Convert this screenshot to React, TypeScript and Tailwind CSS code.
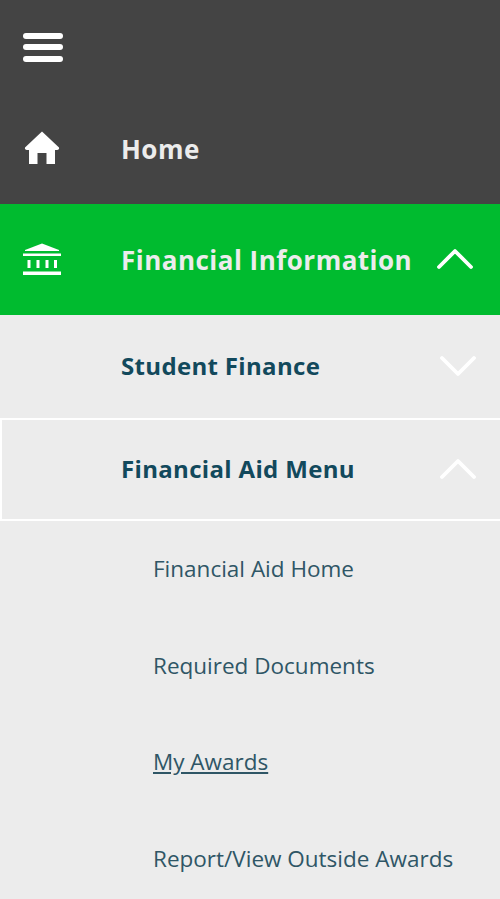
const font = "font-['Open_Sans','Noto_Sans',sans-serif]";

const HomeIcon = () => (
  <svg width="36" height="34" viewBox="0 0 36 34" fill="#fff">
    <path d="M18 0.5 L35 16.5 C35.5 18 34.5 19 33 19 L31 19 L31 33 L22.5 33 L22.5 22 L13.5 22 L13.5 33 L5 33 L5 19 L3 19 C1.5 19 0.5 18 1 16.5 Z" />
  </svg>
);

const BankIcon = () => (
  <svg width="40" height="34" viewBox="0 0 40 34" fill="#fff">
    <path d="M20 0.5 L37 7 L37 8 L3 8 L3 7 Z" />
    <rect x="1" y="10.5" width="38" height="2.5" />
    <rect x="5.5" y="17" width="3" height="8" />
    <rect x="14.5" y="17" width="3" height="8" />
    <rect x="23.5" y="17" width="3" height="8" />
    <rect x="32" y="17" width="3" height="8" />
    <rect x="1" y="28.5" width="38" height="3.5" />
  </svg>
);

// thin rounded chevron, the lucide ones are too short for this
const Chevron = ({ up, className }: { up?: boolean; className?: string }) => (
  <svg width="36" height="22" viewBox="0 0 36 22" fill="none" className={className}>
    <path
      d={up ? "M2 19 L18 3 L34 19" : "M2 3 L18 19 L34 3"}
      stroke="#fff"
      strokeWidth="3.8"
      strokeLinecap="round"
      strokeLinejoin="round"
    />
  </svg>
);

const subLinks = ["Financial Aid Home", "Required Documents", "My Awards", "Report/View Outside Awards"];

export default function App() {
  return (
    <div className={`${font} w-[500px] h-[899px] overflow-hidden bg-[#ececec]`}>
      <div className="bg-[#444444]">
        <div className="h-[94px] pl-[23px] flex items-center">
          <div className="flex flex-col gap-[5.5px] w-10">
            <span className="h-[6px] rounded-sm bg-white" />
            <span className="h-[6px] rounded-sm bg-white" />
            <span className="h-[6px] rounded-sm bg-white" />
          </div>
        </div>
        <div className="h-[110px] flex items-center">
          <div className="w-[121px] pl-6 pb-[2px]"><HomeIcon /></div>
          <span className="text-[26px] font-bold tracking-[0.48px] text-[#ececec]">Home</span>
        </div>
      </div>
      <div className="h-[111px] bg-[#00bb2f] flex items-center">
        <div className="w-[121px] pl-[22px]"><BankIcon /></div>
        <span className="text-[26px] font-bold tracking-[0.48px] text-[#ececec] flex-1 pt-[2px]">Financial Information</span>
        <Chevron up className="mr-[27px] mb-[2px]" />
      </div>
      <div className="h-[103px] flex items-center">
        <span className="pl-[121px] flex-1 text-2xl font-bold tracking-[0.33px] text-[#12495c] pb-[2px]">Student Finance</span>
        <Chevron className="mr-[24px] mb-[2px]" />
      </div>
      <div className="h-[103px] flex items-center border-y-2 border-l-2 border-white">
        <span className="pl-[119px] flex-1 text-2xl font-bold tracking-[0.33px] text-[#12495c] pb-[2px]">Financial Aid Menu</span>
        <Chevron up className="mr-[24px] mb-[2px]" />
      </div>
      <ul>
        {subLinks.map((label) => (
          <li key={label} className="h-[96.5px] pl-[153px] flex items-center">
            <span className={`text-[22.5px] text-[#2f5666] ${label === "My Awards" ? "underline" : ""}`}>{label}</span>
          </li>
        ))}
      </ul>
    </div>
  );
}
